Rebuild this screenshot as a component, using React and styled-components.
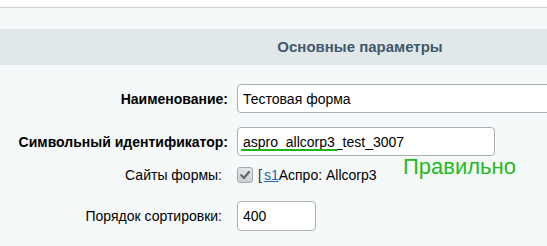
import React from "react";
import styled, { createGlobalStyle } from "styled-components";

const GlobalStyle = createGlobalStyle`
  html, body {
    margin: 0;
    padding: 0;
    background: #f5f9f9;
    overflow: hidden;
  }
  body {
    font-family: "Liberation Sans", Arial, sans-serif;
    color: #000;
  }
`;

const TopStrip = styled.div`
  height: 7px;
  background: #fff;
  border-bottom: 1px solid #cdd3d5;
`;

const Panel = styled.div`
  width: 720px;
  padding-top: 21px;
  background: #f5f9f9;
`;

const SectionHeader = styled.div`
  height: 36px;
  line-height: 36px;
  background: #e0e8ea;
  text-align: center;
  font-size: 15px;
  font-weight: bold;
  color: #43586a;
`;

const Form = styled.div`
  padding-top: 19px;
  display: flex;
  flex-direction: column;
`;

const Row = styled.div`
  display: grid;
  grid-template-columns: 228px 1fr;
  column-gap: 9px;
  align-items: center;
  margin-top: ${(p) => p.$space || 0}px;
`;

const Label = styled.div`
  text-align: right;
  font-size: 14px;
  font-weight: ${(p) => (p.$bold ? "bold" : "normal")};
  padding-right: ${(p) => (p.$bold ? 0 : 6)}px;
  white-space: nowrap;
`;

const Field = styled.div`
  position: relative;
  display: flex;
  align-items: center;
`;

const Input = styled.input`
  box-sizing: border-box;
  width: ${(p) => p.$width}px;
  height: ${(p) => p.$height || 29}px;
  padding: 0 5px;
  border: 1px solid #a9b1b6;
  border-radius: 4px;
  background: #fff;
  font-family: "Liberation Sans", Arial, sans-serif;
  font-size: 14px;
  color: #000;
  outline: none;
`;

const Underline = styled.span`
  position: absolute;
  left: 4px;
  top: 22px;
  width: 97px;
  height: 2px;
  border-radius: 1px;
  background: #1eb41e;
`;

const Note = styled.span`
  position: absolute;
  left: 166px;
  top: 27px;
  font-size: 22px;
  color: #22bb22;
  white-space: nowrap;
`;

const Check = styled.span`
  box-sizing: border-box;
  width: 16px;
  height: 16px;
  border: 1px solid #a3a9ad;
  border-radius: 3px;
  background: linear-gradient(#e3e6e8, #cbd0d3);
  display: inline-flex;
  align-items: center;
  justify-content: center;
  margin-right: 5px;
`;

const SiteText = styled.span`
  font-size: 14px;
  color: #000;
  white-space: nowrap;
`;

const Bracket = styled.span`
  color: #3a2a14;
`;

const SiteLink = styled.a`
  color: #2067b0;
  text-decoration: underline;
  margin-left: 2px;
`;

export default function App() {
  return (
    <>
      <GlobalStyle />
      <TopStrip />
      <Panel>
        <SectionHeader>Основные параметры</SectionHeader>
        <Form>
          <Row>
            <Label $bold>Наименование:</Label>
            <Field>
              <Input $width={480} defaultValue="Тестовая форма" />
            </Field>
          </Row>
          <Row $space={14}>
            <Label $bold>Символьный идентификатор:</Label>
            <Field>
              <Input $width={258} defaultValue="aspro_allcorp3_test_3007" />
              <Underline />
              <Note>Правильно</Note>
            </Field>
          </Row>
          <Row $space={11}>
            <Label>Сайты формы:</Label>
            <Field>
              <Check>
                <svg width="12" height="12" viewBox="0 0 12 12">
                  <polyline
                    points="2.2,6.2 5,9 10,3"
                    fill="none"
                    stroke="#62686c"
                    strokeWidth="2.2"
                    strokeLinecap="round"
                    strokeLinejoin="round"
                  />
                </svg>
              </Check>
              <SiteText>
                <Bracket>[</Bracket>
                <SiteLink href="#">s1</SiteLink>Аспро: Allcorp3
              </SiteText>
            </Field>
          </Row>
          <Row $space={18}>
            <Label>Порядок сортировки:</Label>
            <Field>
              <Input $width={79} $height={30} defaultValue="400" />
            </Field>
          </Row>
        </Form>
      </Panel>
    </>
  );
}
